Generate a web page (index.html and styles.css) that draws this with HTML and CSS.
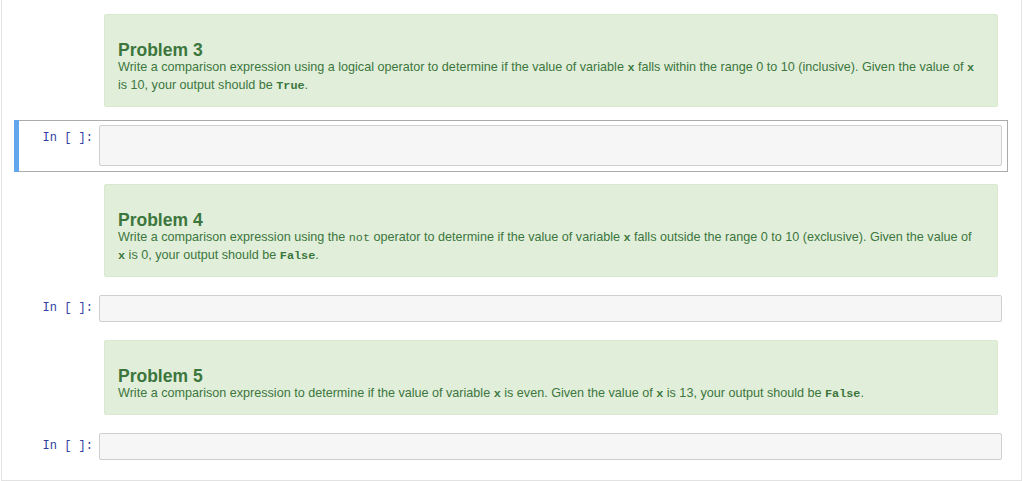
FILE: index.html
```html
<!DOCTYPE html>
<html>
<head>
<meta charset="utf-8">
<link rel="stylesheet" href="styles.css">
</head>
<body>
<div class="notebook">
  <div class="md-cell">
    <div class="alert">
      <p class="title">Problem 3</p>
      <p class="body">Write a comparison expression using a logical operator to determine if the value of variable <code class="b">x</code> falls within the range 0 to 10 (inclusive). Given the value of <code class="b">x</code> is 10, your output should be <code class="b">True</code>.</p>
    </div>
  </div>
  <div class="code-cell selected">
    <div class="prompt">In&nbsp;[&nbsp;]:</div>
    <div class="input tall"></div>
  </div>
  <div class="md-cell">
    <div class="alert">
      <p class="title">Problem 4</p>
      <p class="body">Write a comparison expression using the <code>not</code> operator to determine if the value of variable <code class="b">x</code> falls outside the range 0 to 10 (exclusive). Given the value of <code class="b">x</code> is 0, your output should be <code class="b">False</code>.</p>
    </div>
  </div>
  <div class="code-cell">
    <div class="prompt">In&nbsp;[&nbsp;]:</div>
    <div class="input"></div>
  </div>
  <div class="md-cell">
    <div class="alert">
      <p class="title">Problem 5</p>
      <p class="body">Write a comparison expression to determine if the value of variable <code class="b">x</code> is even. Given the value of <code class="b">x</code> is 13, your output should be <code class="b">False</code>.</p>
    </div>
  </div>
  <div class="code-cell">
    <div class="prompt">In&nbsp;[&nbsp;]:</div>
    <div class="input"></div>
  </div>
</div>
</body>
</html>
```
FILE: styles.css
```css
html, body {
  margin: 0;
  padding: 0;
  background: #ffffff;
}

body {
  font-family: "Liberation Sans", Arial, sans-serif;
  font-size: 13px;
}

.notebook {
  margin: 0 2px 0 1px;
  border-left: 1px solid #e4e4e4;
  border-right: 1px solid #e4e4e4;
  border-bottom: 2px solid #e2e2e2;
  padding: 14px 13px 14px 12px;
  display: flex;
  flex-direction: column;
  gap: 12px;
}

.md-cell {
  padding: 0 10px 0 90px;
}

.alert {
  background: #e1eeda;
  border: 1px solid #d9e9cf;
  border-radius: 2px;
  color: #3c763d;
  padding: 27px 16px 12px 13px;
}

.alert p {
  margin: 0;
}

.title {
  font-weight: bold;
  font-size: 17.5px;
  line-height: 16px;
}

.body {
  font-size: 12.6px;
  line-height: 18px;
}

code {
  font-family: "Liberation Mono", "Courier New", monospace;
  font-size: 11.8px;
  line-height: 1;
}

code.b {
  font-weight: bold;
}

.code-cell {
  display: flex;
  align-items: flex-start;
  border: 1px solid transparent;
  padding: 5px;
  position: relative;
}

.code-cell.selected {
  border-color: #ababab;
  margin-top: 1px;
  padding-top: 4px;
}

.code-cell.selected::before {
  content: "";
  position: absolute;
  left: -1px;
  top: -1px;
  bottom: -1px;
  width: 5px;
  background: #62a6ee;
}

.prompt {
  width: 79px;
  flex: none;
  box-sizing: border-box;
  padding: 5px 6px 0 0;
  text-align: right;
  font-family: "Liberation Mono", "Courier New", monospace;
  font-size: 12px;
  line-height: 17px;
  color: #303f9f;
}

.input {
  flex: 1;
  height: 27px;
  box-sizing: border-box;
  background: #f6f6f6;
  border: 1px solid #cfcfcf;
  border-radius: 2px;
}

.input.tall {
  height: 41px;
}
```
